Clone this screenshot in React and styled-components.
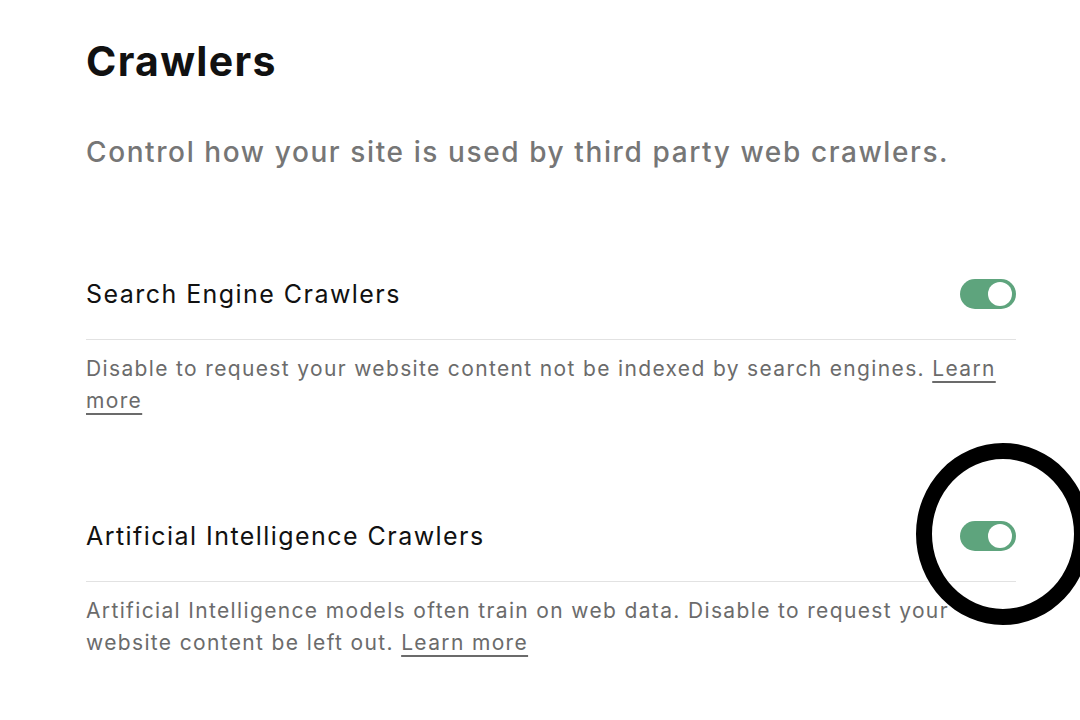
import React from "react";
import styled, { createGlobalStyle } from "styled-components";

const Global = createGlobalStyle`
  html, body { margin: 0; padding: 0; background: #fff; }
  body { font-family: Inter, "Noto Sans", sans-serif; -webkit-font-smoothing: antialiased; }
`;

const Page = styled.main`
  position: relative;
  width: 1080px;
  height: 720px;
  overflow: hidden;
  box-sizing: border-box;
  padding: 37px 64px 0 86px;
`;

const Title = styled.h1`
  margin: 0;
  font-size: 41px;
  line-height: 48px;
  font-weight: 700;
  color: #111;
  letter-spacing: 1.3px;
`;

const Subtitle = styled.p`
  margin: 47px 0 0;
  font-size: 28px;
  line-height: 40px;
  font-weight: 500;
  color: #767676;
  letter-spacing: 1.6px;
`;

const Section = styled.section`
  margin-top: ${(p) => p.$top}px;
`;

const Row = styled.div`
  display: flex;
  align-items: center;
  justify-content: space-between;
  height: 30px;
  padding-bottom: 30px;
  border-bottom: 1px solid #e2e2e2;
`;

const RowLabel = styled.span`
  font-size: 25px;
  line-height: 30px;
  color: #111;
  font-weight: 400;
  letter-spacing: 1.45px;
`;

const Toggle = styled.span`
  position: relative;
  display: inline-block;
  width: 56px;
  height: 30px;
  border-radius: 15px;
  background: ${(p) => (p.$on ? "#5ea47d" : "#cfcfcf")};
  &::after {
    content: "";
    position: absolute;
    top: 3px;
    ${(p) => (p.$on ? "right: 4px;" : "left: 4px;")}
    width: 24px;
    height: 24px;
    border-radius: 50%;
    background: #fff;
  }
`;

const Desc = styled.p`
  margin: 13px 0 0;
  font-size: 21px;
  line-height: 32px;
  color: #6b6b6b;
  letter-spacing: 1.35px;
`;

const Link = styled.a`
  color: #6b6b6b;
  text-decoration: underline;
  text-underline-offset: 5px;
  text-decoration-thickness: 2px;
`;

const Annotation = styled.div`
  position: absolute;
  left: 916px;
  top: 443px;
  width: 174px;
  height: 182px;
  box-sizing: border-box;
  border: 16px solid #000;
  border-radius: 50%;
  pointer-events: none;
`;

export default function App() {
  return (
    <>
      <Global />
      <Page>
        <Title>Crawlers</Title>
        <Subtitle>Control how your site is used by third party web crawlers.</Subtitle>
        <Section $top={107}>
          <Row>
            <RowLabel>Search Engine Crawlers</RowLabel>
            <Toggle $on />
          </Row>
          <Desc>
            Disable to request your website content not be indexed by search engines.{" "}
            <Link href="#">Learn more</Link>
          </Desc>
        </Section>
        <Section $top={104}>
          <Row>
            <RowLabel>Artificial Intelligence Crawlers</RowLabel>
            <Toggle $on />
          </Row>
          <Desc>
            Artificial Intelligence models often train on web data. Disable to request your
            website content be left out. <Link href="#">Learn more</Link>
          </Desc>
        </Section>
        <Annotation />
      </Page>
    </>
  );
}
